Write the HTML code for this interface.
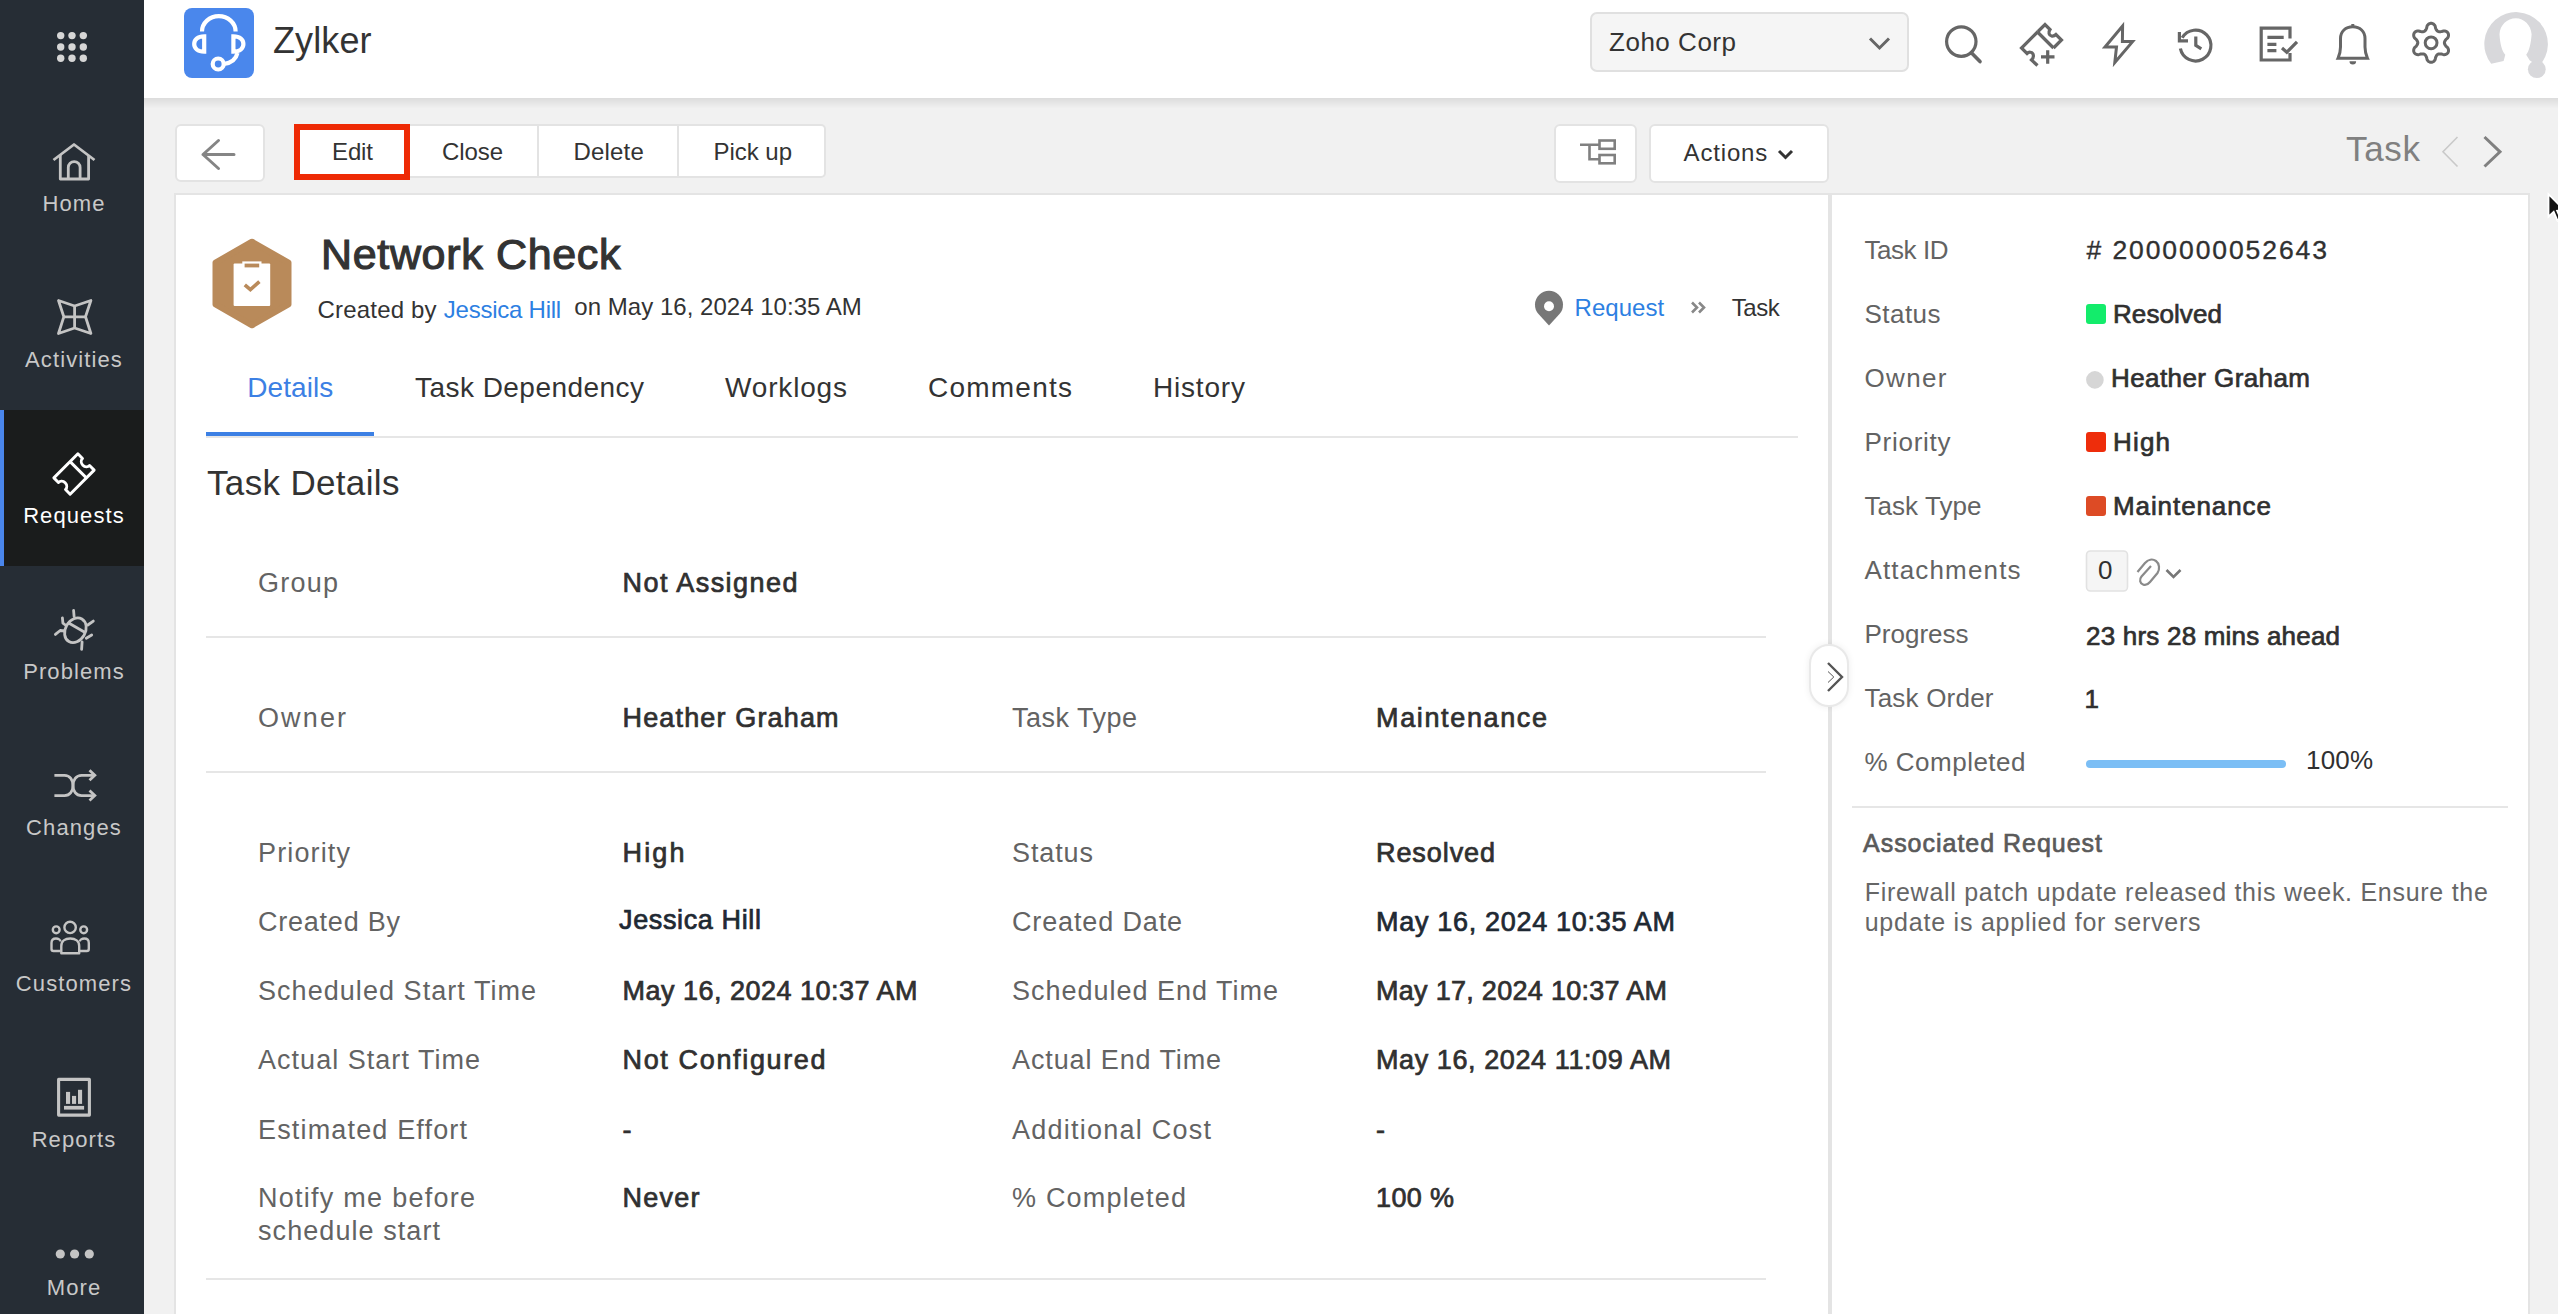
<!DOCTYPE html>
<html><head><meta charset="utf-8"><style>
html,body{margin:0;padding:0;}
body{width:2558px;height:1314px;overflow:hidden;position:relative;background:#F1F1F1;font-family:"Liberation Sans",sans-serif;}
.t{position:absolute;white-space:nowrap;line-height:1;}
.sl{position:absolute;left:0;width:148px;text-align:center;font-size:22px;line-height:1;letter-spacing:1.1px;white-space:nowrap;}
.ov{position:absolute;overflow:visible;}
.box{position:absolute;box-sizing:border-box;}
</style></head><body>
<div class="box" style="left:0;top:0;width:144px;height:1314px;background:#262D35"></div>
<div class="box" style="left:0;top:410px;width:144px;height:156px;background:#1A1C1C"></div>
<div class="box" style="left:0;top:410px;width:4px;height:156px;background:#4A86EC"></div>
<div class="box" style="left:144px;top:0;width:2414px;height:98px;background:#fff"></div>
<div class="box" style="left:144px;top:98px;width:2414px;height:10px;background:linear-gradient(#DCDCDC,#F0F0F0)"></div>
<!-- toolbar buttons -->
<div class="box" style="left:175px;top:124px;width:90px;height:58px;background:#fff;border:2px solid #E3E3E3;border-radius:6px"></div>
<div class="box" style="left:400px;top:124px;width:426px;height:54px;background:#fff;border:2px solid #E3E3E3;border-left:none;border-radius:0 5px 5px 0"></div>
<div class="box" style="left:537px;top:126px;width:2px;height:50px;background:#E3E3E3"></div>
<div class="box" style="left:677px;top:126px;width:2px;height:50px;background:#E3E3E3"></div>
<div class="box" style="left:294px;top:124px;width:116px;height:56px;background:#fff;border:6px solid #EE2A05"></div>
<div class="box" style="left:1554px;top:124px;width:83px;height:59px;background:#fff;border:2px solid #E3E3E3;border-radius:6px"></div>
<div class="box" style="left:1649px;top:124px;width:180px;height:59px;background:#fff;border:2px solid #E3E3E3;border-radius:6px"></div>
<!-- cards -->
<div class="box" style="left:174px;top:193px;width:1658px;height:1130px;background:#fff;border:2px solid #E4E4E4;border-right:4px solid #E4E4E4"></div>
<div class="box" style="left:1832px;top:193px;width:698px;height:1130px;background:#fff;border:2px solid #E4E4E4;border-left:none"></div>
<div class="box" style="left:1809px;top:644px;width:40px;height:63px;background:#fff;border:2px solid #E9E9E9;border-radius:20px;box-shadow:0 0 7px rgba(0,0,0,0.07)"></div>
<!-- tabs line -->
<div class="box" style="left:206px;top:436px;width:1592px;height:2px;background:#E6E6E6"></div>
<div class="box" style="left:206px;top:432px;width:168px;height:4px;background:#3C80E4"></div>
<!-- dividers -->
<div class="box" style="left:206px;top:636px;width:1560px;height:2px;background:#E6E6E6"></div>
<div class="box" style="left:206px;top:771px;width:1560px;height:2px;background:#E6E6E6"></div>
<div class="box" style="left:206px;top:1278px;width:1560px;height:2px;background:#E6E6E6"></div>
<div class="box" style="left:1852px;top:806px;width:656px;height:2px;background:#E6E6E6"></div>

<svg class="ov" width="144" height="1314" viewBox="0 0 144 1314" style="left:0;top:0">
 <g fill="#D6D6D6">
  <circle cx="60.7" cy="35.6" r="3.7"/><circle cx="72" cy="35.6" r="3.7"/><circle cx="83.3" cy="35.6" r="3.7"/>
  <circle cx="60.7" cy="47" r="3.7"/><circle cx="72" cy="47" r="3.7"/><circle cx="83.3" cy="47" r="3.7"/>
  <circle cx="60.7" cy="58.3" r="3.7"/><circle cx="72" cy="58.3" r="3.7"/><circle cx="83.3" cy="58.3" r="3.7"/>
 </g>
 <g fill="none" stroke="#C4C4C4" stroke-width="2.8" stroke-linejoin="round" stroke-linecap="butt">
  <!-- home -->
  <polyline points="53.5,160 74,144.5 94.5,160"/>
  <polyline points="60.3,155 60.3,179 88.6,179 88.6,155"/>
  <path d="M68.3,179 V167.5 A5.9,5.9 0 0 1 80.1,167.5 V179"/>
  <!-- activities -->
  <path d="M58.5,300.5 L74.6,306 L90.9,300.5 L85.5,316.8 L90.9,333.5 L74.6,328 L58.5,333.5 L63.8,316.8 Z" stroke-linejoin="round"/>
  <path d="M74.6,306 V328 M63.8,316.8 H85.5"/>
  <!-- problems bug -->
  <g transform="translate(75.4,630.3) rotate(30)">
   <ellipse cx="0" cy="0" rx="10" ry="13"/>
   <line x1="-10" y1="-3" x2="10" y2="-3"/>
  </g>
  <path d="M73.6,610.5 L74.1,616.5 M62.4,617.9 L62.9,623.2 L66,625.5 M93.3,621.1 L87.8,625 M55.4,634.4 L60.2,630.5 L64.5,631 M91.7,635 L86.3,638.2 M82.1,641.9 L81.6,649.3" stroke-linecap="round"/>
  <!-- changes -->
  <path d="M54.4,775.3 H64.5 C70,775.3 73,780 73,785.4 C73,791 76,795.6 81.6,795.6 H93"/>
  <path d="M54.4,795.6 H64.5 C70,795.6 73,791 73,785.4 C73,780 76,775.3 81.6,775.3 H93"/>
  <path d="M89.5,770.3 L94.8,775.3 L89.5,780.3 M89.5,790.6 L94.8,795.6 L89.5,800.6" stroke-linejoin="miter"/>
  <!-- customers -->
  <g stroke-width="2.4">
   <circle cx="70.1" cy="927.4" r="5.7"/>
   <circle cx="56.2" cy="929.8" r="3.4"/>
   <circle cx="83.7" cy="929.8" r="3.4"/>
   <path d="M61.3,953.3 V946 C61.3,941 65,938.5 70.2,938.5 C75.4,938.5 79.2,941 79.2,946 V953.3 Z"/>
   <path d="M60.5,951 H53.5 C52.4,951 51.5,950 51.5,949 V943 C51.5,940 53.5,938.5 56,938.5 C58.5,938.5 60.5,940 60.5,941.5"/>
   <path d="M79.8,951 H86.8 C87.9,951 88.8,950 88.8,949 V943 C88.8,940 86.8,938.5 84.3,938.5 C81.8,938.5 79.8,940 79.8,941.5"/>
  </g>
  <!-- reports -->
  <rect x="58.6" y="1079.4" width="30.8" height="35.7" stroke-width="3.1"/>
 </g>
 <g fill="#C4C4C4">
  <rect x="66" y="1091.9" width="4.1" height="12"/>
  <rect x="72" y="1095.9" width="4.1" height="8"/>
  <rect x="78" y="1089.8" width="4.1" height="14.1"/>
  <rect x="64" y="1105.9" width="20.1" height="3.7"/>
  <circle cx="60.3" cy="1254" r="4.6"/><circle cx="74.6" cy="1254" r="4.6"/><circle cx="89.3" cy="1254" r="4.6"/>
 </g>
 <!-- requests ticket -->
 <g transform="translate(74,474) rotate(-45)" fill="none" stroke="#FFFFFF" stroke-width="2.9" stroke-linejoin="round">
  <path d="M-17,-11.5 H17 V-5 A4.5,5 0 0 0 17,5 V11.5 H-17 V5 A4.5,5 0 0 0 -17,-5 Z"/>
  <line x1="6" y1="-11.5" x2="6" y2="11.5"/>
 </g>
</svg>

<svg class="ov" width="2558" height="98" viewBox="0 0 2558 98" style="left:0;top:0">
 <rect x="184" y="8" width="70" height="70" rx="8" fill="#4A87EC"/>
 <g fill="none" stroke="#fff" stroke-width="4.2">
  <path d="M202,31.5 A16.8,15.4 0 0 1 235.6,31.5"/>
  <path d="M204.2,36.3 V51.6 C197.5,51.6 194.2,48 194.2,44 C194.2,40 197.5,36.3 204.2,36.3 Z"/>
  <path d="M233.4,36.3 V51.6 C240.1,51.6 243.4,48 243.4,44 C243.4,40 240.1,36.3 233.4,36.3 Z"/>
  <path d="M237.5,53 C236,59 231,63 224,64"/>
  <circle cx="218.2" cy="64" r="5.5"/>
 </g>
 <!-- dropdown -->
 <rect x="1591" y="13" width="317" height="58" rx="6" fill="#F5F5F5" stroke="#E0E0E0" stroke-width="2"/>
 <path d="M1870,38.5 L1879.5,48 L1889,38.5" fill="none" stroke="#666" stroke-width="3"/>
 <g fill="none" stroke="#666666" stroke-width="3.2" stroke-linecap="butt" stroke-linejoin="miter">
  <!-- search -->
  <circle cx="1961.3" cy="41.6" r="14.7"/>
  <path d="M1971.6,53 L1980,61.6" stroke-linecap="round" stroke-width="3.6"/>
  <!-- ticket plus -->
  <path d="M2038,31.5 L2045,24.5 L2050,29.5 C2048,32.5 2049,35.5 2051.5,36 C2053.5,36.5 2055,35.5 2056,34.5 L2061.5,40 L2053.5,48 "/>
  <path d="M2038,31.5 L2021.5,48 L2027,53.5 C2029,51.5 2032,52 2033,54 C2034,56.5 2033,58.5 2031.5,60 L2037.5,65.5"/>
  <path d="M2037.5,32 L2053.5,48"/>
  <path d="M2041,56.9 H2054.5 M2047.7,50.3 V63.7"/>
  <!-- lightning -->
  <path d="M2122.6,26 L2105,47 H2116.5 L2114.8,62.5 L2132.6,41.6 H2122.4 Z" stroke-width="3"/>
  <!-- history -->
  <path d="M2182.2,37.8 A15.4,15.4 0 1 1 2180.4,48.5" />
  <path d="M2179.4,32 V40.8 H2188" />
  <path d="M2195.8,36.5 V45.3 L2201.3,48.8" />
  <!-- tasks -->
  <path d="M2290,38.5 V28.2 H2261.2 V60 H2290 V53" />
  <path d="M2267.4,37.3 H2283.7 M2267.4,44.3 H2276.4 M2267.4,50.6 H2276.4" />
  <path d="M2282,48 L2286.8,52.2 L2297,41.8" />
  <!-- bell -->
  <path d="M2338,58.3 H2367.5 C2366,55 2365,51 2365,47 V38.5 C2365,31.5 2360,26.8 2352.8,26.8 C2345.5,26.8 2340.5,31.5 2340.5,38.5 V47 C2340.5,51 2339.5,55 2338,58.3 Z" stroke-width="3"/>
  <path d="M2352.8,24 V26.5" stroke-width="3"/>
  <path d="M2349.5,61.2 A3.3,3.3 0 0 0 2356.1,61.2 Z" fill="#666666" stroke="none"/>
 </g>
 <!-- gear -->
 <g transform="translate(2431.1,42.8)" fill="none" stroke="#666666" stroke-width="3">
  <path d="M13.30,0.00 L13.32,0.35 L13.39,0.70 L13.50,1.06 L13.65,1.43 L13.85,1.82 L14.09,2.23 L14.37,2.66 L14.71,3.13 L15.12,3.63 L15.84,4.24 L16.54,4.90 L16.89,5.49 L17.14,6.07 L17.31,6.64 L17.40,7.21 L17.42,7.76 L17.38,8.29 L17.28,8.80 L17.11,9.29 L16.89,9.75 L16.60,10.17 L16.26,10.56 L15.87,10.91 L15.43,11.21 L14.94,11.46 L14.41,11.67 L13.83,11.81 L13.20,11.89 L12.51,11.87 L11.60,11.60 L10.71,11.28 L10.06,11.18 L9.49,11.11 L8.98,11.08 L8.50,11.08 L8.07,11.11 L7.67,11.16 L7.30,11.24 L6.96,11.36 L6.65,11.52 L6.36,11.71 L6.09,11.95 L5.83,12.22 L5.58,12.54 L5.35,12.90 L5.11,13.32 L4.88,13.78 L4.65,14.30 L4.42,14.91 L4.24,15.84 L4.03,16.77 L3.69,17.37 L3.31,17.88 L2.90,18.31 L2.46,18.67 L1.99,18.97 L1.51,19.20 L1.01,19.37 L0.51,19.47 L0.00,19.50 L-0.51,19.47 L-1.01,19.37 L-1.51,19.20 L-1.99,18.97 L-2.46,18.67 L-2.90,18.31 L-3.31,17.88 L-3.69,17.37 L-4.03,16.77 L-4.24,15.84 L-4.42,14.91 L-4.65,14.30 L-4.88,13.78 L-5.11,13.32 L-5.35,12.90 L-5.58,12.54 L-5.83,12.22 L-6.09,11.95 L-6.36,11.71 L-6.65,11.52 L-6.96,11.36 L-7.30,11.24 L-7.67,11.16 L-8.07,11.11 L-8.50,11.08 L-8.98,11.08 L-9.49,11.11 L-10.06,11.18 L-10.71,11.28 L-11.60,11.60 L-12.51,11.87 L-13.20,11.89 L-13.83,11.81 L-14.41,11.67 L-14.94,11.46 L-15.43,11.21 L-15.87,10.91 L-16.26,10.56 L-16.60,10.17 L-16.89,9.75 L-17.11,9.29 L-17.28,8.80 L-17.38,8.29 L-17.42,7.76 L-17.40,7.21 L-17.31,6.64 L-17.14,6.07 L-16.89,5.49 L-16.54,4.90 L-15.84,4.24 L-15.12,3.63 L-14.71,3.13 L-14.37,2.66 L-14.09,2.23 L-13.85,1.82 L-13.65,1.43 L-13.50,1.06 L-13.39,0.70 L-13.32,0.35 L-13.30,0.00 L-13.32,-0.35 L-13.39,-0.70 L-13.50,-1.06 L-13.65,-1.43 L-13.85,-1.82 L-14.09,-2.23 L-14.37,-2.66 L-14.71,-3.13 L-15.12,-3.63 L-15.84,-4.24 L-16.54,-4.90 L-16.89,-5.49 L-17.14,-6.07 L-17.31,-6.64 L-17.40,-7.21 L-17.42,-7.76 L-17.38,-8.29 L-17.28,-8.80 L-17.11,-9.29 L-16.89,-9.75 L-16.60,-10.17 L-16.26,-10.56 L-15.87,-10.91 L-15.43,-11.21 L-14.94,-11.46 L-14.41,-11.67 L-13.83,-11.81 L-13.20,-11.89 L-12.51,-11.87 L-11.60,-11.60 L-10.71,-11.28 L-10.06,-11.18 L-9.49,-11.11 L-8.98,-11.08 L-8.50,-11.08 L-8.07,-11.11 L-7.67,-11.16 L-7.30,-11.24 L-6.96,-11.36 L-6.65,-11.52 L-6.36,-11.71 L-6.09,-11.95 L-5.83,-12.22 L-5.58,-12.54 L-5.35,-12.90 L-5.11,-13.32 L-4.88,-13.78 L-4.65,-14.30 L-4.42,-14.91 L-4.24,-15.84 L-4.03,-16.77 L-3.69,-17.37 L-3.31,-17.88 L-2.90,-18.31 L-2.46,-18.67 L-1.99,-18.97 L-1.51,-19.20 L-1.01,-19.37 L-0.51,-19.47 L-0.00,-19.50 L0.51,-19.47 L1.01,-19.37 L1.51,-19.20 L1.99,-18.97 L2.46,-18.67 L2.90,-18.31 L3.31,-17.88 L3.69,-17.37 L4.03,-16.77 L4.24,-15.84 L4.42,-14.91 L4.65,-14.30 L4.88,-13.78 L5.11,-13.32 L5.35,-12.90 L5.58,-12.54 L5.83,-12.22 L6.09,-11.95 L6.36,-11.71 L6.65,-11.52 L6.96,-11.36 L7.30,-11.24 L7.67,-11.16 L8.07,-11.11 L8.50,-11.08 L8.98,-11.08 L9.49,-11.11 L10.06,-11.18 L10.71,-11.28 L11.60,-11.60 L12.51,-11.87 L13.20,-11.89 L13.83,-11.81 L14.41,-11.67 L14.94,-11.46 L15.43,-11.21 L15.87,-10.91 L16.26,-10.56 L16.60,-10.17 L16.89,-9.75 L17.11,-9.29 L17.28,-8.80 L17.38,-8.29 L17.42,-7.76 L17.40,-7.21 L17.31,-6.64 L17.14,-6.07 L16.89,-5.49 L16.54,-4.90 L15.84,-4.24 L15.12,-3.63 L14.71,-3.13 L14.37,-2.66 L14.09,-2.23 L13.85,-1.82 L13.65,-1.43 L13.50,-1.06 L13.39,-0.70 L13.32,-0.35 Z" stroke-linejoin="round"/>
  <circle cx="0" cy="0" r="5.9"/>
 </g>
 <!-- avatar -->
 <path fill="#D8D8DB" d="M2491.2,63.7 A31.8,31.8 0 1 1 2538.5,66.5 L2529.6,60.3 L2526.2,54.8 C2529,51 2531,44 2531.6,34.2 C2531,25 2524,18.2 2515.9,18.2 C2507,18.2 2500,25 2499.5,34.2 C2500,44 2502,51 2505.3,54.8 L2503.6,61 Z"/>
 <circle cx="2536.8" cy="69.2" r="8.9" fill="#D8D8DB"/>
</svg>

<svg class="ov" width="2558" height="1314" viewBox="0 0 2558 1314" style="left:0;top:0">
 <!-- back arrow -->
 <path d="M203,154.5 H234 M218.5,140.5 L203,154.5 L218.5,168.5" fill="none" stroke="#858585" stroke-width="3" stroke-linecap="round" stroke-linejoin="round"/>
 <!-- actions chevron -->
 <path d="M1779,151 L1785.5,157.5 L1792,151" fill="none" stroke="#333" stroke-width="3"/>
 <!-- tree icon -->
 <g fill="none" stroke="#808080" stroke-width="2.6">
  <path d="M1580,144.8 H1599.5 M1589.5,144.8 V159.3 H1599.5"/>
  <rect x="1599.5" y="140.5" width="15.2" height="8.3"/>
  <rect x="1599.5" y="155" width="15.2" height="8.3"/>
 </g>
 <!-- task prev/next -->
 <path d="M2457.5,137 L2443,151.8 L2457.5,166.5" fill="none" stroke="#C9C9C9" stroke-width="1.6"/>
 <path d="M2484.5,137 L2500,151.8 L2484.5,166.5" fill="none" stroke="#808080" stroke-width="3"/>
 <!-- hexagon -->
 <polygon points="252.0,241.7 288.5,262.6 288.5,304.4 252.0,325.3 215.5,304.4 215.5,262.6" fill="#B98A5A" stroke="#B98A5A" stroke-width="6" stroke-linejoin="round"/>
 <rect x="233.6" y="263.5" width="36.6" height="42.5" rx="1" fill="#fff"/>
 <rect x="242.3" y="261.4" width="19.2" height="8.2" fill="#fff"/>
 <rect x="244.6" y="263.6" width="14.6" height="3.8" fill="#B98A5A"/>
 <path d="M244.8,284.8 L250.4,289.6 L259.4,281.6" fill="none" stroke="#B98A5A" stroke-width="3.6"/>
 <!-- pin -->
 <path d="M1549,325.5 L1538.5,314 A14,14 0 1 1 1559.5,314 Z" fill="#777"/>
 <circle cx="1549" cy="306.3" r="5" fill="#fff"/>
 <path d="M1692,302.5 L1697,307.5 L1692,312.5 M1699,302.5 L1704,307.5 L1699,312.5" fill="none" stroke="#888" stroke-width="2.6"/>
 <!-- collapse pill -->
 <path d="M1828,663 L1842,677 L1828,691" fill="none" stroke="#555" stroke-width="2.4"/>
 <path d="M1828,671.5 L1833.8,677 L1828,682.5" fill="none" stroke="#555" stroke-width="1"/>
 <!-- swatches right panel -->
 <rect x="2086" y="304" width="20" height="20" rx="3" fill="#13EC6B"/>
 <circle cx="2094.9" cy="379.9" r="8.8" fill="#D6D6D6"/>
 <rect x="2086" y="432" width="20" height="20" rx="3" fill="#EE2D0B"/>
 <rect x="2086" y="496" width="20" height="20" rx="3" fill="#DD4B25"/>
 <rect x="2086.5" y="551" width="41" height="40" rx="4" fill="#F5F5F5" stroke="#E2E2E2" stroke-width="1.6"/>
 <!-- paperclip -->
 <path d="M2151,566 L2141.5,576.5 C2139,579.5 2140,583.5 2143,584.5 C2145.5,585.5 2148,584.5 2150,582 L2157.5,573 C2160,569.5 2159.5,563.5 2156,561 C2152.5,558.5 2148,559.5 2145,563 L2137.5,572" fill="none" stroke="#8A8A8A" stroke-width="2.2"/>
 <path d="M2166.5,570 L2173.5,577 L2180.5,570" fill="none" stroke="#777" stroke-width="2.6"/>
 <!-- progress -->
 <rect x="2086" y="760" width="200" height="8" rx="4" fill="#7BBEF5"/>
 <!-- cursor -->
 <g transform="translate(2548.5,194.2)"><path d="M0,0 L0,22.5 L5.2,17.6 L9,26.5 L12.3,25 L8.6,16.5 L16,16 Z" fill="#141414" stroke="#fff" stroke-width="1.8" stroke-linejoin="miter"/></g>
</svg>
<div class="sl" style="top:193.4px;color:#C8C8C8">Home</div>
<div class="sl" style="top:349.4px;color:#C8C8C8">Activities</div>
<div class="sl" style="top:505.4px;color:#FFFFFF">Requests</div>
<div class="sl" style="top:661.4px;color:#C8C8C8">Problems</div>
<div class="sl" style="top:817.4px;color:#C8C8C8">Changes</div>
<div class="sl" style="top:973.4px;color:#C8C8C8">Customers</div>
<div class="sl" style="top:1129.4px;color:#C8C8C8">Reports</div>
<div class="sl" style="top:1277.4px;color:#C8C8C8">More</div>
<div class="t" id="t0" style="left:273.0px;top:22.5px;font-size:36px;color:#333;letter-spacing:0.10px;">Zylker</div>
<div class="t" id="t1" style="left:1609.0px;top:29.0px;font-size:26px;color:#333;letter-spacing:0.52px;">Zoho Corp</div>
<div class="t" id="t2" style="left:332.0px;top:139.7px;font-size:24px;color:#333;letter-spacing:-0.12px;">Edit</div>
<div class="t" id="t3" style="left:442.0px;top:139.7px;font-size:24px;color:#333;letter-spacing:-0.09px;">Close</div>
<div class="t" id="t4" style="left:573.4px;top:139.7px;font-size:24px;color:#333;letter-spacing:0.21px;">Delete</div>
<div class="t" id="t5" style="left:713.6px;top:139.7px;font-size:24px;color:#333;letter-spacing:-0.05px;">Pick up</div>
<div class="t" id="t6" style="left:1683.6px;top:140.7px;font-size:24px;color:#333;letter-spacing:0.82px;">Actions</div>
<div class="t" id="t7" style="left:2346.0px;top:131.4px;font-size:35px;color:#808080;letter-spacing:0.68px;">Task</div>
<div class="t" id="t8" style="left:321.0px;top:233.2px;font-size:43px;color:#333;-webkit-text-stroke:1.16px #333;letter-spacing:0.66px;">Network Check</div>
<div class="t" id="t9" style="left:317.6px;top:297.5px;font-size:24px;color:#333;letter-spacing:0.18px;">Created by</div>
<div class="t" id="t10" style="left:443.8px;top:297.5px;font-size:24px;color:#2D7FE2;letter-spacing:-0.24px;">Jessica Hill</div>
<div class="t" id="t11" style="left:574.3px;top:295.3px;font-size:24px;color:#333;letter-spacing:0.03px;">on May 16, 2024 10:35 AM</div>
<div class="t" id="t12" style="left:1574.6px;top:295.7px;font-size:24px;color:#2D7FE2;letter-spacing:0.03px;">Request</div>
<div class="t" id="t13" style="left:1731.7px;top:295.7px;font-size:24px;color:#333;letter-spacing:-0.42px;">Task</div>
<div class="t" id="t14" style="left:247.3px;top:374.1px;font-size:28px;color:#3C80E4;letter-spacing:0.07px;">Details</div>
<div class="t" id="t15" style="left:415.0px;top:374.1px;font-size:28px;color:#333;letter-spacing:0.46px;">Task Dependency</div>
<div class="t" id="t16" style="left:725.0px;top:374.1px;font-size:28px;color:#333;letter-spacing:0.83px;">Worklogs</div>
<div class="t" id="t17" style="left:928.0px;top:374.1px;font-size:28px;color:#333;letter-spacing:1.23px;">Comments</div>
<div class="t" id="t18" style="left:1153.0px;top:374.1px;font-size:28px;color:#333;letter-spacing:0.81px;">History</div>
<div class="t" id="t19" style="left:207.0px;top:465.4px;font-size:35px;color:#333;letter-spacing:0.34px;">Task Details</div>
<div class="t" id="t20" style="left:258.0px;top:569.5px;font-size:27px;color:#636363;letter-spacing:1.24px;">Group</div>
<div class="t" id="t21" style="left:622.5px;top:569.5px;font-size:27px;color:#303030;-webkit-text-stroke:0.73px #303030;letter-spacing:1.44px;">Not Assigned</div>
<div class="t" id="t22" style="left:258.0px;top:704.9px;font-size:27px;color:#636363;letter-spacing:2.12px;">Owner</div>
<div class="t" id="t23" style="left:622.5px;top:704.9px;font-size:27px;color:#303030;-webkit-text-stroke:0.73px #303030;letter-spacing:1.15px;">Heather Graham</div>
<div class="t" id="t24" style="left:1012.0px;top:704.9px;font-size:27px;color:#636363;letter-spacing:0.49px;">Task Type</div>
<div class="t" id="t25" style="left:1376.0px;top:704.9px;font-size:27px;color:#303030;-webkit-text-stroke:0.73px #303030;letter-spacing:1.64px;">Maintenance</div>
<div class="t" id="t26" style="left:258.0px;top:840.0px;font-size:27px;color:#636363;letter-spacing:1.14px;">Priority</div>
<div class="t" id="t27" style="left:622.5px;top:840.0px;font-size:27px;color:#303030;-webkit-text-stroke:0.73px #303030;letter-spacing:2.16px;">High</div>
<div class="t" id="t28" style="left:1012.0px;top:840.0px;font-size:27px;color:#636363;letter-spacing:0.89px;">Status</div>
<div class="t" id="t29" style="left:1376.0px;top:840.0px;font-size:27px;color:#303030;-webkit-text-stroke:0.73px #303030;letter-spacing:0.92px;">Resolved</div>
<div class="t" id="t30" style="left:258.0px;top:909.1px;font-size:27px;color:#636363;letter-spacing:0.77px;">Created By</div>
<div class="t" id="t31" style="left:619.0px;top:907.1px;font-size:27px;color:#1F2933;-webkit-text-stroke:0.73px #1F2933;letter-spacing:0.63px;">Jessica Hill</div>
<div class="t" id="t32" style="left:1012.0px;top:909.1px;font-size:27px;color:#636363;letter-spacing:0.86px;">Created Date</div>
<div class="t" id="t33" style="left:1376.0px;top:909.1px;font-size:27px;color:#1F2933;-webkit-text-stroke:0.73px #1F2933;letter-spacing:0.69px;">May 16, 2024 10:35 AM</div>
<div class="t" id="t34" style="left:258.0px;top:977.8px;font-size:27px;color:#636363;letter-spacing:1.05px;">Scheduled Start Time</div>
<div class="t" id="t35" style="left:622.5px;top:977.8px;font-size:27px;color:#303030;-webkit-text-stroke:0.73px #303030;letter-spacing:0.49px;">May 16, 2024 10:37 AM</div>
<div class="t" id="t36" style="left:1012.0px;top:977.8px;font-size:27px;color:#636363;letter-spacing:0.99px;">Scheduled End Time</div>
<div class="t" id="t37" style="left:1376.0px;top:977.8px;font-size:27px;color:#303030;-webkit-text-stroke:0.73px #303030;letter-spacing:0.29px;">May 17, 2024 10:37 AM</div>
<div class="t" id="t38" style="left:258.0px;top:1046.5px;font-size:27px;color:#636363;letter-spacing:1.03px;">Actual Start Time</div>
<div class="t" id="t39" style="left:622.5px;top:1046.5px;font-size:27px;color:#303030;-webkit-text-stroke:0.73px #303030;letter-spacing:1.65px;">Not Configured</div>
<div class="t" id="t40" style="left:1012.0px;top:1046.5px;font-size:27px;color:#636363;letter-spacing:0.89px;">Actual End Time</div>
<div class="t" id="t41" style="left:1376.0px;top:1046.5px;font-size:27px;color:#303030;-webkit-text-stroke:0.73px #303030;letter-spacing:0.59px;">May 16, 2024 11:09 AM</div>
<div class="t" id="t42" style="left:258.0px;top:1116.6px;font-size:27px;color:#636363;letter-spacing:1.16px;">Estimated Effort</div>
<div class="t" id="t43" style="left:622.5px;top:1116.6px;font-size:27px;color:#303030;-webkit-text-stroke:0.73px #303030;">-</div>
<div class="t" id="t44" style="left:1012.0px;top:1116.6px;font-size:27px;color:#636363;letter-spacing:1.24px;">Additional Cost</div>
<div class="t" id="t45" style="left:1376.0px;top:1116.6px;font-size:27px;color:#303030;-webkit-text-stroke:0.73px #303030;">-</div>
<div class="t" id="t46" style="left:258.0px;top:1185.2px;font-size:27px;color:#636363;letter-spacing:1.26px;">Notify me before</div>
<div class="t" id="t47" style="left:622.5px;top:1185.2px;font-size:27px;color:#303030;-webkit-text-stroke:0.73px #303030;letter-spacing:1.24px;">Never</div>
<div class="t" id="t48" style="left:1012.0px;top:1185.2px;font-size:27px;color:#636363;letter-spacing:1.19px;">% Completed</div>
<div class="t" id="t49" style="left:1376.0px;top:1185.2px;font-size:27px;color:#303030;-webkit-text-stroke:0.73px #303030;letter-spacing:0.36px;">100 %</div>
<div class="t" id="t50" style="left:258.0px;top:1217.9px;font-size:27px;color:#636363;letter-spacing:1.07px;">schedule start</div>
<div class="t" id="t51" style="left:1864.5px;top:237.0px;font-size:26px;color:#636363;letter-spacing:-0.45px;">Task ID</div>
<div class="t" id="t52" style="left:1864.5px;top:300.6px;font-size:26px;color:#636363;letter-spacing:0.46px;">Status</div>
<div class="t" id="t53" style="left:1864.5px;top:365.0px;font-size:26px;color:#636363;letter-spacing:1.36px;">Owner</div>
<div class="t" id="t54" style="left:1864.5px;top:428.6px;font-size:26px;color:#636363;letter-spacing:0.73px;">Priority</div>
<div class="t" id="t55" style="left:1864.5px;top:492.6px;font-size:26px;color:#636363;letter-spacing:0.05px;">Task Type</div>
<div class="t" id="t56" style="left:1864.5px;top:556.6px;font-size:26px;color:#636363;letter-spacing:1.15px;">Attachments</div>
<div class="t" id="t57" style="left:1864.5px;top:620.6px;font-size:26px;color:#636363;letter-spacing:-0.01px;">Progress</div>
<div class="t" id="t58" style="left:1864.5px;top:684.6px;font-size:26px;color:#636363;letter-spacing:0.20px;">Task Order</div>
<div class="t" id="t59" style="left:1864.5px;top:748.6px;font-size:26px;color:#636363;letter-spacing:0.49px;">% Completed</div>
<div class="t" id="t60" style="left:2086.5px;top:236.6px;font-size:26.5px;color:#303030;letter-spacing:1.91px;-webkit-text-stroke:0.35px #303030;"># 2000000052643</div>
<div class="t" id="t61" style="left:2113.0px;top:300.6px;font-size:26px;color:#303030;-webkit-text-stroke:0.70px #303030;letter-spacing:0.08px;">Resolved</div>
<div class="t" id="t62" style="left:2111.0px;top:365.0px;font-size:26px;color:#303030;-webkit-text-stroke:0.70px #303030;letter-spacing:0.41px;">Heather Graham</div>
<div class="t" id="t63" style="left:2113.0px;top:428.6px;font-size:26px;color:#303030;-webkit-text-stroke:0.70px #303030;letter-spacing:1.17px;">High</div>
<div class="t" id="t64" style="left:2113.0px;top:493.3px;font-size:26px;color:#303030;-webkit-text-stroke:0.70px #303030;letter-spacing:0.91px;">Maintenance</div>
<div class="t" id="t65" style="left:2098.0px;top:557.4px;font-size:26px;color:#303030;">0</div>
<div class="t" id="t66" style="left:2086.0px;top:622.9px;font-size:26px;color:#303030;-webkit-text-stroke:0.70px #303030;letter-spacing:0.21px;">23 hrs 28 mins ahead</div>
<div class="t" id="t67" style="left:2084.5px;top:686.4px;font-size:26px;color:#303030;-webkit-text-stroke:0.70px #303030;">1</div>
<div class="t" id="t68" style="left:2306.0px;top:747.3px;font-size:26px;color:#303030;letter-spacing:0.17px;">100%</div>
<div class="t" id="t69" style="left:1863.0px;top:830.5px;font-size:25px;color:#5A5A5A;-webkit-text-stroke:0.68px #5A5A5A;letter-spacing:0.98px;">Associated Request</div>
<div class="t" id="t70" style="left:1864.7px;top:880.1px;font-size:25px;color:#666;letter-spacing:0.72px;">Firewall patch update released this week. Ensure the</div>
<div class="t" id="t71" style="left:1864.7px;top:909.5px;font-size:25px;color:#666;letter-spacing:0.78px;">update is applied for servers</div>
</body></html>
